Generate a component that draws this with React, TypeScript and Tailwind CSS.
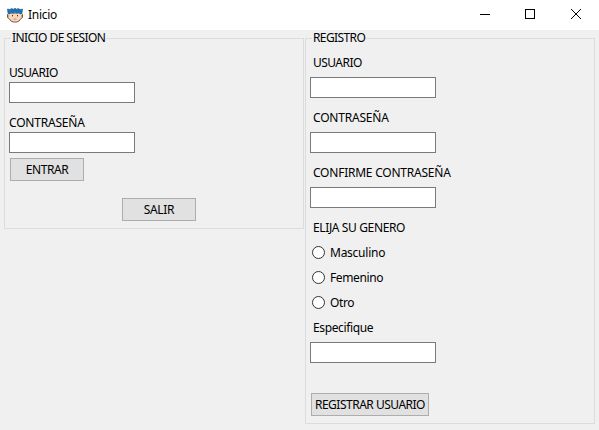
import React, { useState } from "react";

function FaceIcon() {
  return (
    <svg width="18" height="16" viewBox="0 0 18 16" className="shrink-0">
      <path d="M3 6 L1.5 7.5 L1.5 10.5 L3 11.5 L5 14 L7.5 15 L10.5 15 L13 14 L15 11.5 L16.5 10.5 L16.5 7.5 L15 6 Z" fill="#f8d8bb" stroke="#63463c" strokeWidth=".9" />
      <path d="M2.5 8v2M15.5 8v2" stroke="#d99b78" />
      <path d="M1.5 2 L4 2.6 L5.5 1.4 L7.5 2.2 L9 1.2 L10.5 2.2 L12.5 1.4 L14 2.6 L16.5 2 L16 6.5 L14.5 7 L13 5.5 L10.5 6 L9 5 L7.5 6 L5 5.5 L3.5 7 L2 6.5 Z" fill="#1873bb" stroke="#1b5c94" strokeWidth=".6" />
      <rect x="6" y="8" width="1" height="1.3" fill="#4a3030" />
      <rect x="11" y="8" width="1" height="1.3" fill="#4a3030" />
      <path d="M7.5 12h3" stroke="#b3735f" strokeWidth=".8" />
    </svg>
  );
}

function Field({ label, className, labelClass, secret }: { label: string; className: string; labelClass: string; secret?: boolean }) {
  return (
    <label className={`flex flex-col ${className}`}>
      <span className={`h-4 whitespace-nowrap ${labelClass}`}>{label}</span>
      <input
        type={secret ? "password" : "text"}
        className="h-[21px] w-[126px] border border-[#7a7a7a] bg-white px-1 outline-none"
      />
    </label>
  );
}

const button =
  "flex h-[23px] shrink-0 items-center justify-center whitespace-nowrap border border-[#adadad] bg-[#e1e1e1]";

const genders = [
  { name: "Masculino", spacing: "tracking-[-0.25px]" },
  { name: "Femenino", spacing: "tracking-[-0.37px]" },
  { name: "Otro", spacing: "tracking-[-0.4px]" },
];

export default function App() {
  const [gender, setGender] = useState("");
  return (
    <div className="flex h-[430px] w-[599px] flex-col overflow-hidden bg-[#f0f0f0] font-['Noto_Sans','Open_Sans',sans-serif] text-[12px] leading-4 text-black">
      <header className="flex h-[30px] shrink-0 items-center bg-white pl-1.5">
        <FaceIcon />
        <span className="ml-1 flex-1 tracking-[-0.3px]">Inicio</span>
        <svg width="138" height="30" fill="none" stroke="#000" shapeRendering="crispEdges">
          <path d="M19 14.5h10" />
          <rect x="64.5" y="9.5" width="9" height="9" />
          <path d="M110 9l10 10M120 9l-10 10" shapeRendering="auto" />
        </svg>
      </header>
      <main className="flex items-start pl-1">
        <fieldset className="h-[199px] w-[300px] border border-[#dcdcdc] pl-1">
          <legend className="ml-0.5 h-[17px] whitespace-nowrap px-px tracking-[-0.56px]">INICIO DE SESION</legend>
          <Field label="USUARIO" className="mt-[18px] gap-px" labelClass="tracking-[-0.55px]" />
          <Field label="CONTRASEÑA" className="mt-3 gap-px" labelClass="tracking-[-0.2px]" secret />
          <button className={`${button} ml-px mt-[5px] w-[74px] tracking-[-0.4px]`}>ENTRAR</button>
          <button className={`${button} ml-[113px] mt-[17px] w-[74px] tracking-[-0.3px]`}>SALIR</button>
        </fieldset>
        <fieldset className="ml-px h-[394px] w-[290px] border border-[#dcdcdc] pl-1">
          <legend className="ml-0.5 h-[17px] whitespace-nowrap px-px tracking-[-0.6px]">REGISTRO</legend>
          <Field label="USUARIO" className="mt-2 gap-1.5" labelClass="ml-[3px] tracking-[-0.55px]" />
          <Field label="CONTRASEÑA" className="mt-3 gap-1.5" labelClass="ml-[3px] tracking-[-0.2px]" secret />
          <Field label="CONFIRME CONTRASEÑA" className="mt-3 gap-1.5" labelClass="ml-[3px] tracking-[-0.23px]" secret />
          <div className="ml-[3px] mt-3 h-4 tracking-[-0.37px]">ELIJA SU GENERO</div>
          <div className="ml-0.5 mt-[9px] flex flex-col gap-[9px]">
            {genders.map(({ name, spacing }) => (
              <label key={name} className="flex h-4 items-start gap-[5px]">
                <input
                  type="radio"
                  name="gender"
                  checked={gender === name}
                  onChange={() => setGender(name)}
                  className="mt-px size-[13px] appearance-none rounded-full border border-[#333] bg-white checked:border-4"
                />
                <span className={spacing}>{name}</span>
              </label>
            ))}
          </div>
          <Field label="Especifique" className="mt-[9px] gap-1.5" labelClass="ml-[3px] tracking-[-0.37px]" />
          <button className={`${button} ml-px mt-[30px] w-[118px] tracking-[-0.5px]`}>REGISTRAR USUARIO</button>
        </fieldset>
      </main>
    </div>
  );
}
